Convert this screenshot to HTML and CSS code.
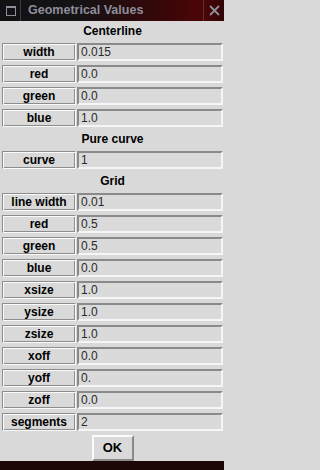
FILE: index.html
```html
<!DOCTYPE html>
<html>
<head>
<meta charset="utf-8">
<link rel="stylesheet" href="styles.css">
</head>
<body>
<div class="window">
  <div class="titlebar">
    <div class="tb-menu">
      <svg width="10" height="10" viewBox="0 0 10 10"><rect x="0.5" y="0.5" width="9" height="9" fill="none" stroke="#8e8e9c" stroke-width="1"/><rect x="0" y="0" width="10" height="2" fill="#8e8e9c"/></svg>
    </div>
    <div class="tb-title">Geometrical Values</div>
    <div class="tb-close">
      <svg width="11" height="11" viewBox="0 0 11 11"><path d="M1 1 L10 10 M10 1 L1 10" stroke="#8e8e9c" stroke-width="1.8" fill="none"/></svg>
    </div>
  </div>
  <div class="content">
    <div class="section">Centerline</div>
    <div class="row"><div class="label">width</div><div class="entry">0.015</div></div>
    <div class="row"><div class="label">red</div><div class="entry">0.0</div></div>
    <div class="row"><div class="label">green</div><div class="entry">0.0</div></div>
    <div class="row"><div class="label">blue</div><div class="entry">1.0</div></div>
    <div class="section">Pure curve</div>
    <div class="row"><div class="label">curve</div><div class="entry">1</div></div>
    <div class="section">Grid</div>
    <div class="row"><div class="label">line width</div><div class="entry">0.01</div></div>
    <div class="row"><div class="label">red</div><div class="entry">0.5</div></div>
    <div class="row"><div class="label">green</div><div class="entry">0.5</div></div>
    <div class="row"><div class="label">blue</div><div class="entry">0.0</div></div>
    <div class="row"><div class="label">xsize</div><div class="entry">1.0</div></div>
    <div class="row"><div class="label">ysize</div><div class="entry">1.0</div></div>
    <div class="row"><div class="label">zsize</div><div class="entry">1.0</div></div>
    <div class="row"><div class="label">xoff</div><div class="entry">0.0</div></div>
    <div class="row"><div class="label">yoff</div><div class="entry">0.</div></div>
    <div class="row"><div class="label">zoff</div><div class="entry">0.0</div></div>
    <div class="row"><div class="label">segments</div><div class="entry">2</div></div>
    <div class="actions"><div class="ok">OK</div></div>
  </div>
  <div class="bottombar"></div>
</div>
</body>
</html>
```
FILE: styles.css
```css
html, body {
  margin: 0;
  padding: 0;
  background: #d9d9d9;
}
.window {
  width: 224px;
  height: 470px;
  display: flex;
  flex-direction: column;
  background: #d9d9d9;
  font-family: "Liberation Sans", Arial, Helvetica, sans-serif;
  overflow: hidden;
}
.titlebar {
  height: 21px;
  flex: none;
  display: flex;
  align-items: stretch;
  background: linear-gradient(to right, #121214 0%, #141214 35%, #3a0608 75%, #5a0608 100%);
}
.tb-menu {
  width: 21px;
  display: flex;
  align-items: center;
  justify-content: center;
  border-right: 1px solid #3a3a40;
  background: #121214;
  padding-left: 2px;
  box-sizing: border-box;
}
.tb-title {
  flex: 1;
  padding-left: 7px;
  color: #8e8e9c;
  font-weight: bold;
  font-size: 12.5px;
  line-height: 21px;
  white-space: nowrap;
}
.tb-close {
  width: 20px;
  border-left: 1px solid #5a3034;
  display: flex;
  align-items: center;
  justify-content: center;
  background: linear-gradient(to right, #4a0608, #300406);
}
.content {
  flex: 1;
  display: flex;
  flex-direction: column;
  gap: 4px;
  padding: 2px 1px 0 2px;
}
.section {
  height: 16px;
  line-height: 16px;
  text-align: center;
  font-weight: bold;
  font-size: 12px;
  color: #000;
}
.row {
  display: grid;
  grid-template-columns: 74px 1fr;
  column-gap: 1px;
  height: 18px;
}
.label {
  box-sizing: border-box;
  height: 18px;
  border-style: solid;
  border-width: 1px;
  border-color: #8c8c8c #fafafa #fafafa #8c8c8c;
  box-shadow: inset 1px 1px 0 #fafafa, inset -1px -1px 0 #8c8c8c;
  text-align: center;
  font-weight: bold;
  font-size: 12px;
  line-height: 16px;
  color: #000;
}
.entry {
  box-sizing: border-box;
  height: 18px;
  border-style: solid;
  border-width: 2px;
  border-color: #8a8a8a #f6f6f6 #f6f6f6 #8a8a8a;
  background: #dadada;
  padding-left: 2px;
  font-size: 12px;
  line-height: 14px;
  color: #2a2a2a;
}
.actions {
  display: flex;
  justify-content: center;
}
.ok {
  box-sizing: border-box;
  width: 42px;
  height: 26px;
  border-style: solid;
  border-width: 2px;
  border-color: #fafafa #8a8a8a #8a8a8a #fafafa;
  text-align: center;
  font-weight: bold;
  font-size: 13px;
  line-height: 22px;
  color: #000;
}
.bottombar {
  height: 9px;
  flex: none;
  background: #1c0606;
}
```
